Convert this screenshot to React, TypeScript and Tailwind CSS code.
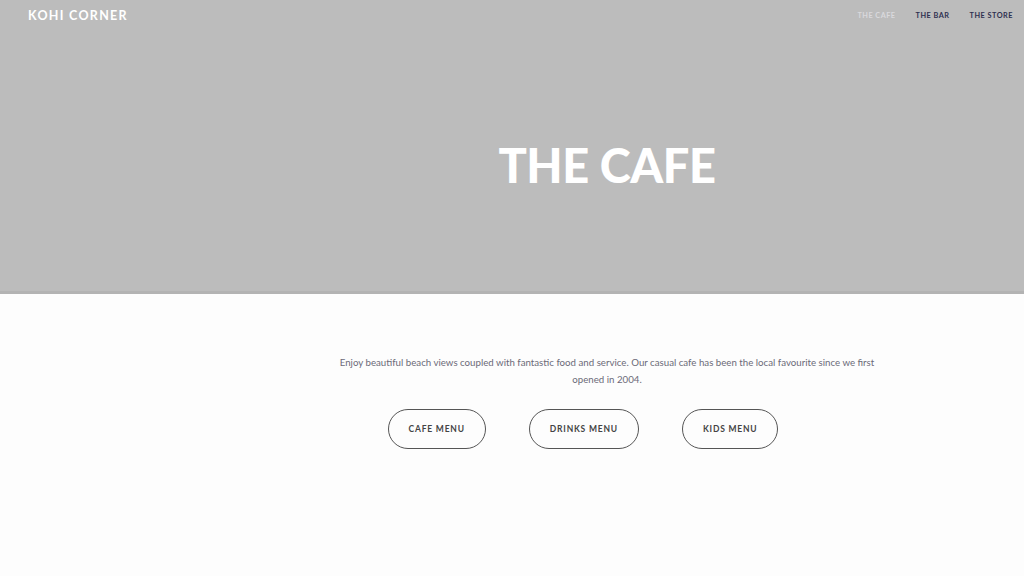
export default function App() {
  const menus = ["CAFE MENU", "DRINKS MENU", "KIDS MENU"];

  return (
    <div className="min-h-[576px] w-full bg-[#fdfdfd] font-['Lato',sans-serif]">
      <section className="h-[294px] bg-[#bcbcbc] border-b-[3px] border-[#b3b3b3] flex flex-col">
        <header className="flex items-center justify-between pl-[28px] pr-[11px] pt-[7px]">
          <div className="text-white text-[12.5px] font-bold tracking-[1.3px]">KOHI CORNER</div>
          <nav className="flex items-center gap-[20px] text-[7.3px] font-bold tracking-[0.5px]">
            <a className="text-[#d9d9dc]">THE CAFE</a>
            <a className="text-[#2e3050]">THE BAR</a>
            <a className="text-[#2e3050]">THE STORE</a>
          </nav>
        </header>
        <div className="flex-1 flex items-center justify-center pl-[190px] pt-[14px]">
          <h1 className="text-white text-[47px] font-black tracking-[-0.4px] leading-none">THE CAFE</h1>
        </div>
      </section>

      <main className="pl-[190px] pt-[60px] flex flex-col items-center">
        <p className="w-[545px] text-center text-[9.7px] leading-[17px] text-[#6b6a78]">
          Enjoy beautiful beach views coupled with fantastic food and service. Our casual cafe has been the local favourite since we first opened in 2004.
        </p>
        <div className="mt-[21px] mr-[48px] flex items-center gap-[43px]">
          {menus.map((m) => (
            <button
              key={m}
              className="h-[40px] px-[20px] rounded-full border border-[#555] text-[8.5px] font-bold tracking-[0.8px] text-[#444]"
            >
              {m}
            </button>
          ))}
        </div>
      </main>
    </div>
  );
}
